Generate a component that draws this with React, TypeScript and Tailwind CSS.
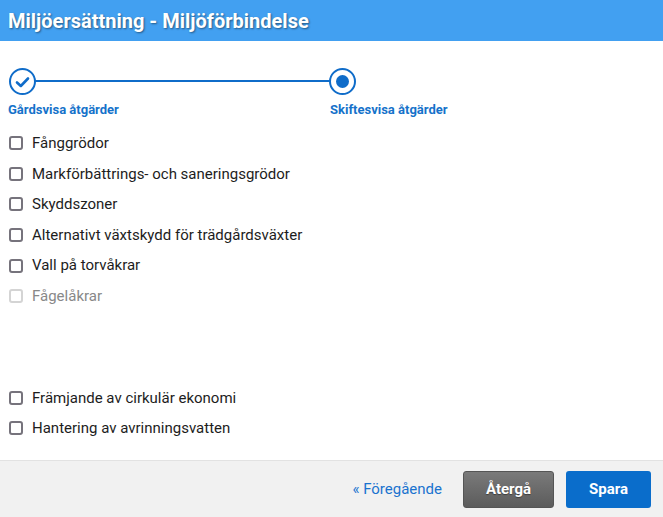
import React from "react";

const actions = [
  { label: "Fånggrödor" },
  { label: "Markförbättrings- och saneringsgrödor" },
  { label: "Skyddszoner" },
  { label: "Alternativt växtskydd för trädgårdsväxter" },
  { label: "Vall på torvåkrar" },
  { label: "Fågelåkrar", disabled: true },
];

const otherActions = ["Främjande av cirkulär ekonomi", "Hantering av avrinningsvatten"];

const CheckRow: React.FC<{ label: string; disabled?: boolean }> = ({ label, disabled }) => (
  <label className="flex items-center h-[30.6px] gap-[9px] pl-[9px]">
    <span
      className={[
        "w-[14px] h-[14px] rounded-[3px] border-2 bg-white",
        disabled ? "border-[#d4d4d4]" : "border-[#76737c]",
      ].join(" ")}
    />
    <span className={disabled ? "text-[15px] text-[#888]" : "text-[15px] text-[#1d1d1d]"}>{label}</span>
  </label>
);

export default function App() {
  return (
    <div className="w-[663px] h-[517px] flex flex-col bg-white font-['Roboto',sans-serif]">
      {/* Header */}
      <div className="h-[41px] bg-[#42a0f1] flex items-center px-[8px]">
        <h1 className="text-white text-[20px] font-bold [text-shadow:1px_1px_2px_rgba(0,0,0,0.45)]">
          Miljöersättning - Miljöförbindelse
        </h1>
      </div>

      {/* Body */}
      <div className="flex-1 flex flex-col">
        {/* Stepper */}
        <div className="relative mt-[27px] h-[27px] ml-[9px] w-[347px] flex items-center justify-between">
          <div className="absolute left-[26px] right-[26px] top-[12px] h-[2px] bg-[#0f6cc9]" />
          <div className="relative w-[27px] h-[27px] rounded-full border-2 border-[#0f6cc9] bg-white flex items-center justify-center">
            <svg width="15" height="12" viewBox="0 0 15 12">
              <path d="M2 6.5 L5.8 10 L13 2.5" stroke="#0f6cc9" strokeWidth="2.6" fill="none" strokeLinecap="round" strokeLinejoin="round" />
            </svg>
          </div>
          <div className="relative w-[27px] h-[27px] rounded-full border-2 border-[#0f6cc9] bg-white flex items-center justify-center">
            <div className="w-[13px] h-[13px] rounded-full bg-[#0f6cc9]" />
          </div>
        </div>
        <div className="flex text-[13px] font-bold text-[#1572ca] mt-[6px] h-[18px] leading-[18px]">
          <span className="pl-[8px] w-[330px]">Gårdsvisa åtgärder</span>
          <span>Skiftesvisa åtgärder</span>
        </div>

        <div className="mt-[9px] flex flex-col">
          {actions.map((a) => (
            <CheckRow key={a.label} label={a.label} disabled={a.disabled} />
          ))}
        </div>

        <div className="mt-[71px] flex flex-col">
          {otherActions.map((l) => (
            <CheckRow key={l} label={l} />
          ))}
        </div>
      </div>

      {/* Footer */}
      <div className="h-[57px] bg-[#f1f1f1] border-t border-[#e2e2e2] flex items-center justify-end gap-[12px] pr-[12px]">
        <a className="text-[15px] text-[#1a73cf] mr-[9px]">«&nbsp;Föregående</a>
        <button className="w-[91px] h-[37px] rounded-[3px] border border-[#555] bg-gradient-to-b from-[#7a7a7a] to-[#5c5c5c] text-white text-[15px] font-bold [text-shadow:0_1px_1px_rgba(0,0,0,0.4)]">
          Återgå
        </button>
        <button className="w-[85px] h-[37px] rounded-[3px] bg-[#0a6dcb] text-white text-[15px] font-bold">
          Spara
        </button>
      </div>
    </div>
  );
}
